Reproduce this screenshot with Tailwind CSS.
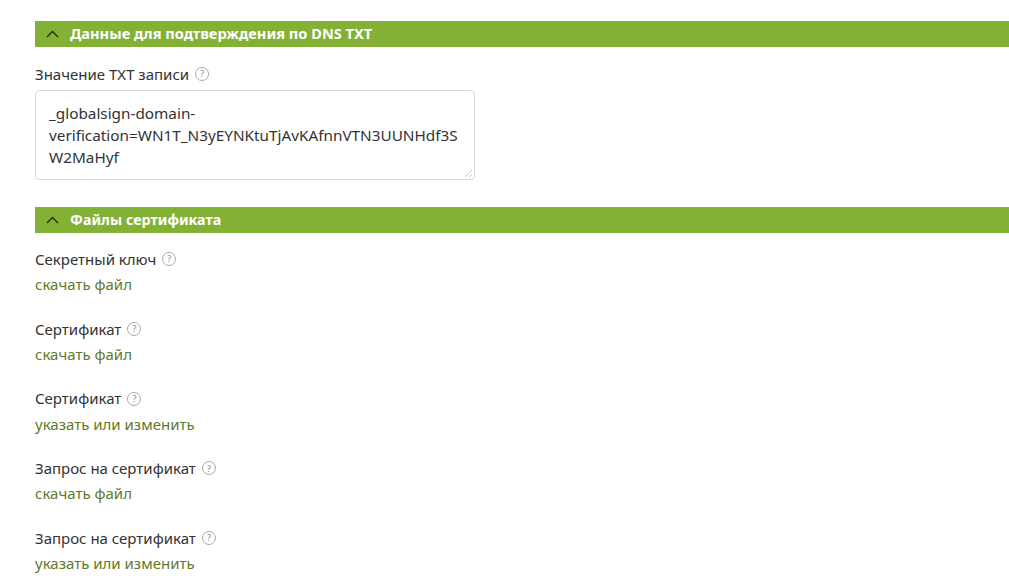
<!DOCTYPE html>
<html lang="ru">
<head>
    <meta charset="UTF-8">
    <title>Файлы сертификата</title>
    <script src="https://cdn.jsdelivr.net/npm/@tailwindcss/browser@4"></script>
</head>
<body class="bg-white overflow-hidden font-['Noto_Sans',sans-serif] text-[15px] text-[#333]">
    <div class="w-[1009px] h-[587px] overflow-hidden pl-[35px] pt-[21px]">
        <div class="h-[26px] bg-[#83b135] flex items-center pl-[11px]">
            <svg class="w-[13px] h-[8px]" viewBox="0 0 13 8" fill="none" stroke="#1f2b0c" stroke-width="1.4"><path d="M1 7 6.5 1.5 12 7"/></svg>
            <span class="ml-[11px] font-bold text-white text-[14.6px]">Данные для подтверждения по DNS TXT</span>
        </div>
        <div class="mt-[17px] h-[20px] flex items-center">
            <span>Значение TXT записи</span>
            <span class="ml-[6px] w-[14px] h-[14px] rounded-full border border-[#aaa] text-[#888] text-[9px] flex items-center justify-center">?</span>
        </div>
        <div class="relative mt-[6px] w-[440px] h-[90px]">
            <textarea readonly class="block w-full h-full resize-none border border-[#d9d9d9] rounded-[4px] px-[13px] pt-[11px] text-[15.3px] leading-[22px] text-[#333] outline-none">_globalsign-domain-verification=WN1T_N3yEYNKtuTjAvKAfnnVTN3UUNHdf3SW2MaHyf</textarea>
            <svg class="absolute right-[2px] bottom-[2px] w-[9px] h-[9px]" viewBox="0 0 9 9" fill="none" stroke="#c4c4c4" stroke-width="1"><path d="M1 8 8 1M5 8 8 5"/></svg>
        </div>
        <div class="mt-[27px] h-[26px] bg-[#83b135] flex items-center pl-[11px]">
            <svg class="w-[13px] h-[8px]" viewBox="0 0 13 8" fill="none" stroke="#1f2b0c" stroke-width="1.4"><path d="M1 7 6.5 1.5 12 7"/></svg>
            <span class="ml-[11px] font-bold text-white text-[14.3px]">Файлы сертификата</span>
        </div>
        <div class="mt-[16px] flex flex-col gap-[24.75px]">
            <div>
                <div class="h-[20px] flex items-center"><span>Секретный ключ</span><span class="ml-[6px] w-[14px] h-[14px] rounded-full border border-[#aaa] text-[#888] text-[9px] flex items-center justify-center">?</span></div>
                <a class="block mt-[5px] h-[20px] leading-[20px] text-[#5f7a2a]">скачать файл</a>
            </div>
            <div>
                <div class="h-[20px] flex items-center"><span>Сертификат</span><span class="ml-[6px] w-[14px] h-[14px] rounded-full border border-[#aaa] text-[#888] text-[9px] flex items-center justify-center">?</span></div>
                <a class="block mt-[5px] h-[20px] leading-[20px] text-[#5f7a2a]">скачать файл</a>
            </div>
            <div>
                <div class="h-[20px] flex items-center"><span>Сертификат</span><span class="ml-[6px] w-[14px] h-[14px] rounded-full border border-[#aaa] text-[#888] text-[9px] flex items-center justify-center">?</span></div>
                <a class="block mt-[5px] h-[20px] leading-[20px] text-[#5f7a2a]">указать или изменить</a>
            </div>
            <div>
                <div class="h-[20px] flex items-center"><span>Запрос на сертификат</span><span class="ml-[6px] w-[14px] h-[14px] rounded-full border border-[#aaa] text-[#888] text-[9px] flex items-center justify-center">?</span></div>
                <a class="block mt-[5px] h-[20px] leading-[20px] text-[#5f7a2a]">скачать файл</a>
            </div>
            <div>
                <div class="h-[20px] flex items-center"><span>Запрос на сертификат</span><span class="ml-[6px] w-[14px] h-[14px] rounded-full border border-[#aaa] text-[#888] text-[9px] flex items-center justify-center">?</span></div>
                <a class="block mt-[5px] h-[20px] leading-[20px] text-[#5f7a2a]">указать или изменить</a>
            </div>
        </div>
    </div>
</body>
</html>
